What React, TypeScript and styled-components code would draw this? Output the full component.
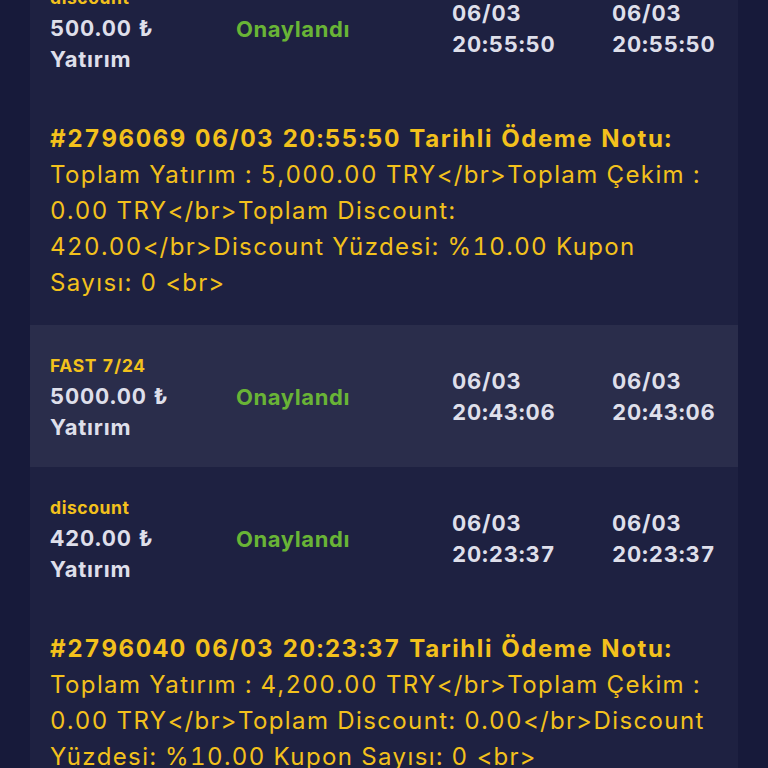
import React from 'react'
import styled, { createGlobalStyle } from 'styled-components'

const GlobalStyle = createGlobalStyle`
  html, body {
    margin: 0;
    padding: 0;
    background: #171a3a;
    font-family: Inter, "Noto Sans", sans-serif;
    font-feature-settings: 'tnum';
    overflow: hidden;
  }
`

const Page = styled.div`
  height: 768px;
  overflow: hidden;
  padding: 0 30px;
`

const Panel = styled.div`
  background: #1e2141;
  margin-top: -43px;
`

const Row = styled.div<{ $active?: boolean }>`
  display: grid;
  grid-template-columns: 186px 216px 160px 1fr;
  align-items: center;
  padding: 25px 20px 24px;
  background: ${(p) => (p.$active ? '#2a2d4b' : 'transparent')};
`

const Cell = styled.div`
  display: flex;
  flex-direction: column;
  font-size: 22px;
  font-weight: 700;
  line-height: 31px;
  letter-spacing: 0.8px;
  color: #dedfea;
`

const Method = styled.span`
  font-size: 17.5px;
  letter-spacing: 0.6px;
  color: #f3c11c;
`

const Status = styled.span`
  font-size: 22px;
  font-weight: 700;
  letter-spacing: 0.6px;
  color: #69b436;
`

const Note = styled.div`
  padding: 22px 20px 24px;
  color: #f3c11c;
  font-size: 24px;
  line-height: 36px;
  letter-spacing: 1.4px;
`

const NoteTitle = styled.div`
  font-weight: 700;
  letter-spacing: 1.6px;
`

type Tx = {
  method: string
  amount: string
  date: string
  time: string
  active?: boolean
  note?: { title: string; body: string }
}

const rows: Tx[] = [
  {
    method: 'discount',
    amount: '500.00',
    date: '06/03',
    time: '20:55:50',
    note: {
      title: '#2796069 06/03 20:55:50 Tarihli Ödeme Notu:',
      body: 'Toplam Yatırım : 5,000.00 TRY</br>Toplam Çekim : 0.00 TRY</br>Toplam Discount: 420.00</br>Discount Yüzdesi: %10.00 Kupon Sayısı: 0 <br>',
    },
  },
  { method: 'FAST 7/24', amount: '5000.00', date: '06/03', time: '20:43:06', active: true },
  {
    method: 'discount',
    amount: '420.00',
    date: '06/03',
    time: '20:23:37',
    note: {
      title: '#2796040 06/03 20:23:37 Tarihli Ödeme Notu:',
      body: 'Toplam Yatırım : 4,200.00 TRY</br>Toplam Çekim : 0.00 TRY</br>Toplam Discount: 0.00</br>Discount Yüzdesi: %10.00 Kupon Sayısı: 0 <br>',
    },
  },
]

const App = () => {
  return (
    <Page>
      <GlobalStyle />
      <Panel>
        {rows.map((r, i) => (
          <React.Fragment key={i}>
            <Row $active={r.active}>
              <Cell>
                <Method>{r.method}</Method>
                <span>{r.amount} ₺</span>
                <span>Yatırım</span>
              </Cell>
              <Status>Onaylandı</Status>
              <Cell>
                <span>{r.date}</span>
                <span>{r.time}</span>
              </Cell>
              <Cell>
                <span>{r.date}</span>
                <span>{r.time}</span>
              </Cell>
            </Row>
            {r.note && (
              <Note>
                <NoteTitle>{r.note.title}</NoteTitle>
                <div>{r.note.body}</div>
              </Note>
            )}
          </React.Fragment>
        ))}
      </Panel>
    </Page>
  )
}

export default App
